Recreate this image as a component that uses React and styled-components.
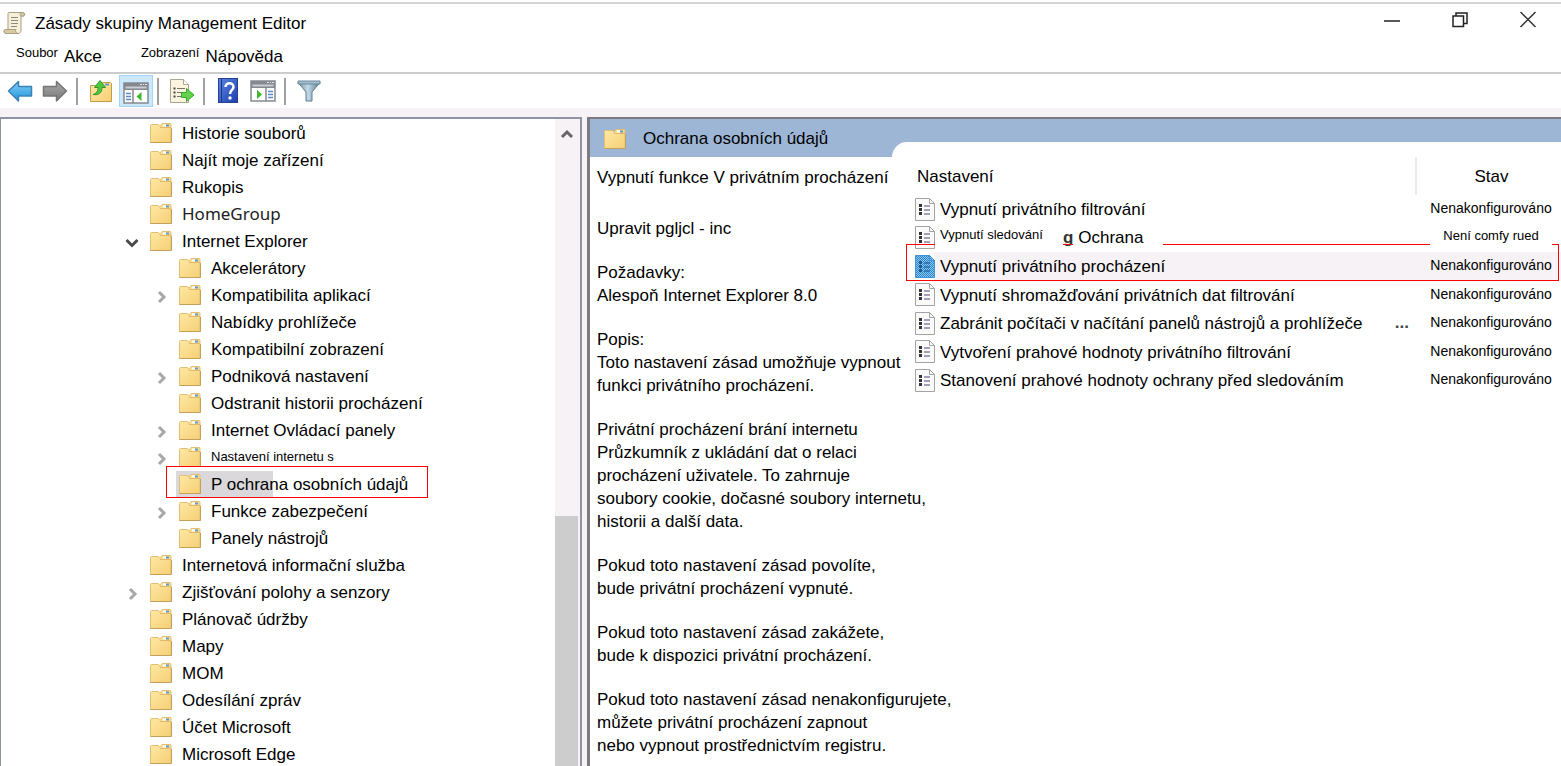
import React from "react";
import styled, { createGlobalStyle, css } from "styled-components";

const tree = [
    { label: "Historie souborů" },
    { label: "Najít moje zařízení" },
    { label: "Rukopis" },
    { label: "HomeGroup", alt: true },
    { label: "Internet Explorer", arrow: "down" },
    { label: "Akcelerátory", nested: true },
    { label: "Kompatibilita aplikací", nested: true, arrow: "right" },
    { label: "Nabídky prohlížeče", nested: true },
    { label: "Kompatibilní zobrazení", nested: true },
    { label: "Podniková nastavení", nested: true, arrow: "right" },
    { label: "Odstranit historii procházení", nested: true },
    { label: "Internet Ovládací panely", nested: true, arrow: "right" },
    { label: "Nastavení internetu s", nested: true, arrow: "right", small: true },
    { label: "P ochrana osobních údajů", nested: true, selected: true },
    { label: "Funkce zabezpečení", nested: true, arrow: "right" },
    { label: "Panely nástrojů", nested: true },
    { label: "Internetová informační služba" },
    { label: "Zjišťování polohy a senzory", arrow: "right" },
    { label: "Plánovač údržby" },
    { label: "Mapy" },
    { label: "MOM" },
    { label: "Odesílání zpráv" },
    { label: "Účet Microsoft" },
    { label: "Microsoft Edge" },
];

const details = [
    ["Požadavky:", "Alespoň Internet Explorer 8.0"],
    ["Popis:", "Toto nastavení zásad umožňuje vypnout", "funkci privátního procházení."],
    [
        "Privátní procházení brání internetu",
        "Průzkumník z ukládání dat o relaci",
        "procházení uživatele. To zahrnuje",
        "soubory cookie, dočasné soubory internetu,",
        "historii a další data.",
    ],
    ["Pokud toto nastavení zásad povolíte,", "bude privátní procházení vypnuté."],
    ["Pokud toto nastavení zásad zakážete,", "bude k dispozici privátní procházení."],
    [
        "Pokud toto nastavení zásad nenakonfigurujete,",
        "můžete privátní procházení zapnout",
        "nebo vypnout prostřednictvím registru.",
    ],
];

const settings = [
    { name: "Vypnutí privátního filtrování", state: "Nenakonfigurováno" },
    { name: "Vypnutí sledování", rest: "Ochrana", state: "Není comfy rued" },
    { name: "Vypnutí privátního procházení", state: "Nenakonfigurováno", selected: true },
    { name: "Vypnutí shromažďování privátních dat filtrování", state: "Nenakonfigurováno" },
    {
        name: "Zabránit počítači v načítání panelů nástrojů a prohlížeče",
        state: "Nenakonfigurováno",
        more: true,
    },
    { name: "Vytvoření prahové hodnoty privátního filtrování", state: "Nenakonfigurováno" },
    { name: "Stanovení prahové hodnoty ochrany před sledováním", state: "Nenakonfigurováno" },
];

const App = () => {
    return (
        <Window>
            <GlobalStyle />
            <Gradients />
            <TitleBar>
                <ScrollIcon />
                <Title>Zásady skupiny Management Editor</Title>
                <ControlButton aria-label="Minimalizovat">
                    <svg width="18" height="18" viewBox="0 0 18 18">
                        <path d="M1 10h16" stroke="#222" strokeWidth="1.500" />
                    </svg>
                </ControlButton>
                <ControlButton aria-label="Obnovit">
                    <svg width="18" height="18" viewBox="0 0 18 18" fill="none" stroke="#222" strokeWidth="1.500">
                        <path d="M2 5h10.500v10.500H2zM5 4.500V2h11v10.500h-3" />
                    </svg>
                </ControlButton>
                <ControlButton aria-label="Zavřít">
                    <svg width="18" height="18" viewBox="0 0 18 18">
                        <path d="M1.500 1l15 15M16.500 1l-15 15" stroke="#333" strokeWidth="1.500" />
                    </svg>
                </ControlButton>
            </TitleBar>
            <MenuBar>
                <MenuButton $small>Soubor</MenuButton>
                <MenuButton $wide>Akce</MenuButton>
                <MenuButton $small>Zobrazení</MenuButton>
                <MenuButton>Nápověda</MenuButton>
            </MenuBar>
            <Toolbar>
                <ToolButton aria-label="Zpět">
                    <ArrowIcon fill="url(#blueArrow)" stroke="#3b82b5" />
                </ToolButton>
                <ToolButton aria-label="Vpřed">
                    <ArrowIcon fill="url(#grayArrow)" stroke="#757575" flip />
                </ToolButton>
                <Separator />
                <ToolButton aria-label="O úroveň výš">
                    <FolderUpIcon />
                </ToolButton>
                <ToolButton aria-label="Strom konzoly" $active>
                    <PaneIcon />
                </ToolButton>
                <Separator />
                <ToolButton aria-label="Exportovat seznam">
                    <ExportIcon />
                </ToolButton>
                <Separator />
                <ToolButton aria-label="Nápověda">
                    <HelpIcon />
                </ToolButton>
                <ToolButton aria-label="Podokno akcí">
                    <PaneIcon right />
                </ToolButton>
                <Separator />
                <ToolButton aria-label="Filtr">
                    <FunnelIcon />
                </ToolButton>
            </Toolbar>
            <Panes>
                <TreePane>
                    <Tree>
                        {tree.map((item) => (
                            <TreeItem key={item.label} $nested={item.nested}>
                                <Toggle>{item.arrow && <Chevron direction={item.arrow} />}</Toggle>
                                {item.selected && <Highlight />}
                                <FolderIcon />
                                <TreeLabel $small={item.small} $alt={item.alt}>
                                    {item.label}
                                </TreeLabel>
                                {item.selected && <TreeMark />}
                            </TreeItem>
                        ))}
                    </Tree>
                    <ScrollTrack>
                        <ScrollUp aria-label="Posunout nahoru">
                            <svg width="14" height="10" viewBox="0 0 14 10" fill="none">
                                <path d="M2 8l5-5 5 5" stroke="#666" strokeWidth="3" />
                            </svg>
                        </ScrollUp>
                        <ScrollSpace />
                        <ScrollThumb />
                    </ScrollTrack>
                </TreePane>
                <DetailPane>
                    <Description>
                        <DetailHeader>
                            <FolderIcon />
                            Ochrana osobních údajů
                        </DetailHeader>
                        <DescriptionBody>
                            <Heading>Vypnutí funkce V privátním procházení</Heading>
                            <Paragraph>Upravit pgljcl - inc</Paragraph>
                            {details.map((lines) => (
                                <Paragraph key={lines[0]}>
                                    {lines.map((line) => (
                                        <Line key={line}>{line}</Line>
                                    ))}
                                </Paragraph>
                            ))}
                        </DescriptionBody>
                    </Description>
                    <ListArea>
                        <Table>
                            <thead>
                                <tr>
                                    <HeadCell>Nastavení</HeadCell>
                                    <HeadCell $state>Stav</HeadCell>
                                </tr>
                            </thead>
                            <tbody>
                                {settings.map((item) => (
                                    <Row key={item.name} $selected={item.selected}>
                                        <NameCell>
                                            {item.selected && <RowMark />}
                                            <NameContent>
                                                <SettingIcon selected={item.selected} />
                                                {item.rest ? (
                                                    <>
                                                        <Patch $small>{item.name}</Patch>
                                                        <Letter>g</Letter>
                                                        <Patch>{item.rest}</Patch>
                                                    </>
                                                ) : (
                                                    <SettingName>{item.name}</SettingName>
                                                )}
                                                {item.more && <More>...</More>}
                                            </NameContent>
                                        </NameCell>
                                        <StateCell>
                                            <State $patch={Boolean(item.rest)}>{item.state}</State>
                                        </StateCell>
                                    </Row>
                                ))}
                            </tbody>
                        </Table>
                    </ListArea>
                </DetailPane>
            </Panes>
        </Window>
    );
};

export default App;

const Gradients = () => (
    <svg width="0" height="0" aria-hidden="true" display="block">
        <defs>
            <linearGradient id="folder" x1="0" y1="0" x2="1" y2="1">
                <stop offset="0" stopColor="#ffe9a6" />
                <stop offset="1" stopColor="#f5cf74" />
            </linearGradient>
            <linearGradient id="blueArrow" x1="0" y1="0" x2="0" y2="1">
                <stop offset="0" stopColor="#7fd0f8" />
                <stop offset="1" stopColor="#1f93dc" />
            </linearGradient>
            <linearGradient id="grayArrow" x1="0" y1="0" x2="0" y2="1">
                <stop offset="0" stopColor="#aaa" />
                <stop offset="1" stopColor="#777" />
            </linearGradient>
            <linearGradient id="help" x1="0" y1="0" x2="1" y2="1">
                <stop offset="0" stopColor="#5d86e0" />
                <stop offset="1" stopColor="#1c3fae" />
            </linearGradient>
            <linearGradient id="funnel" x1="0" y1="0" x2="1" y2="0">
                <stop offset="0" stopColor="#6d8ea5" />
                <stop offset="0.45" stopColor="#c4dbe8" />
                <stop offset="1" stopColor="#55758c" />
            </linearGradient>
            <pattern id="dither" width="2" height="2" patternUnits="userSpaceOnUse">
                <rect width="2" height="2" fill="#8cc4ec" />
                <rect width="1" height="1" fill="#2a86cf" />
                <rect x="1" y="1" width="1" height="1" fill="#2a86cf" />
            </pattern>
        </defs>
    </svg>
);

const FolderIcon = () => (
    <Icon width="22" height="20" viewBox="0 0 22 20">
        <path d="M.5 2.500q0-1 1-1h7l1.500 2 2-3h8q1 0 1 1V19.500H.5z" fill="url(#folder)" stroke="#e3bf74" />
        <path d="M10 4.500h11" stroke="#e0b868" fill="none" />
        <path d="M13 2.500h3" stroke="#fff" strokeWidth="2" />
        <path d="M16 2.500h3" stroke="#5b9bd5" strokeWidth="2" />
        <path d="M.5 19.500h21V5" stroke="#c4a05c" fill="none" />
    </Icon>
);

const ScrollIcon = () => (
    <Icon width="23" height="24" viewBox="0 0 23 24">
        <path
            d="M6 1.500h14c2 0 2.500 3 .5 3.500H18v14c0 2-1 3.500-3 3.500H3c-2.500 0-3-4 0-4h2V4c0-1.500 0-2.500 1-2.500z"
            fill="#f6efd9"
            stroke="#a99f83"
        />
        <path
            d="M18 5c-1.500-.5-1.500-3 1-3.500 3 0 3 3.500 1 3.500zM3 18.500h10c-1 1.500 0 4 2 4H3c-2.500 0-2.500-4 0-4z"
            fill="#d9cba0"
            stroke="#a99f83"
        />
        <path d="M8 6.500h7M8 9.500h7M8 12.500h7M8 15.500h6" stroke="#8e8a80" />
    </Icon>
);

const ArrowIcon = ({ fill, stroke, flip }) => (
    <Icon width="26" height="22" viewBox="0 0 26 22">
        <path
            d={
                flip
                    ? "M24.500 11L14.500 1.500V6.500H1.500v9.500h13v5z"
                    : "M1.500 11L11.500 1.500V6.500h13v9.500h-13v5z"
            }
            fill={fill}
            stroke={stroke}
            strokeWidth="1.500"
            strokeLinejoin="round"
        />
    </Icon>
);

const FolderUpIcon = () => (
    <Icon width="24" height="24" viewBox="0 0 24 24">
        <path d="M1.500 6.500h10l2-3h8l1 1v18h-21z" fill="url(#folder)" stroke="#c39b4c" />
        <path d="M16 5.500h4" stroke="#5b9bd5" strokeWidth="2" />
        <path d="M4 15.500c4-1 5-4 5-7H5.500L11 1.500l5.500 7H13c0 5-3 8-9 7z" fill="#4fc83d" stroke="#2d972b" />
    </Icon>
);

const PaneIcon = ({ right }) => (
    <Icon width="26" height="22" viewBox="0 0 26 22">
        <rect x="1" y="1" width="24" height="20" fill="#fff" stroke="#85898f" strokeWidth="1.500" />
        <path d="M1 1h24v7H1z" fill="#85898f" />
        <path d="M2.500 5.500h21" stroke="#c9ccd0" strokeWidth="2" />
        <path d="M17 2.500h2M20 2.500h1M22 2.500h2" stroke="#e8eaee" />
        {right ? (
            <>
                <path d="M16 8v13" stroke="#85898f" strokeWidth="1.500" />
                <path d="M7 10v9l5-4.500z" fill="#3db82d" />
                <path d="M18 11.500h5M18 14.500h5M18 17.500h5" stroke="#5a8bc6" strokeWidth="1.500" />
            </>
        ) : (
            <>
                <path d="M10 8v13" stroke="#85898f" strokeWidth="1.500" />
                <path d="M18.500 10v9l-5-4.500z" fill="#3db82d" />
                <path d="M3 11.500h5M3 14.500h5M3 17.500h5" stroke="#5a8bc6" strokeWidth="1.500" />
            </>
        )}
    </Icon>
);

const ExportIcon = () => (
    <Icon width="26" height="26" viewBox="0 0 26 26">
        <path d="M1.500 1.500h13l5 5v18h-18z" fill="#fbf5df" stroke="#aaa58f" />
        <path d="M14.500 1.500v5h5" fill="#fff" stroke="#aaa58f" />
        <path d="M4.500 10.500h2M4.500 14.500h2M4.500 18.500h2" stroke="#444" strokeWidth="2" />
        <path d="M8 10.500h8M8 14.500h5M8 18.500h5" stroke="#77726a" />
        <path d="M12.500 14.500h5v-4l7.500 6.500-7.500 6.500v-4h-5z" fill="#5fd44a" stroke="#3aa833" />
    </Icon>
);

const HelpIcon = () => (
    <Icon width="20" height="26" viewBox="0 0 20 26">
        <rect x=".5" y=".5" width="19" height="24" fill="url(#help)" stroke="#26408f" />
        <path d="M3.500 1v23" stroke="#1c3690" />
        <path d="M7.500 9c0-5 8-5 8 0 0 3-3.500 3-3.500 7" fill="none" stroke="#fff" strokeWidth="2.500" />
        <circle cx="12" cy="20" r="1.700" fill="#fff" />
    </Icon>
);

const FunnelIcon = () => (
    <Icon width="24" height="22" viewBox="0 0 24 22">
        <path d="M1 2.500l8 9.500v9h6v-9l8-9.500z" fill="url(#funnel)" stroke="#5f7d92" />
        <path d="M1 1h22v3H1z" fill="#a3bccc" stroke="#6b899d" />
    </Icon>
);

const SettingIcon = ({ selected }) => (
    <Icon width="20" height="23" viewBox="0 0 20 23">
        <path
            d="M.5.5h14l5 5v17H.5z"
            fill={selected ? "url(#dither)" : "#fafafa"}
            stroke={selected ? "#3f93d4" : "#a3a3a3"}
        />
        <path d="M14.500.5v5h5" fill="none" stroke={selected ? "#3f93d4" : "#a3a3a3"} />
        <path d="M4 7.500h3M4 11.500h3M4 15.500h3" stroke={selected ? "#1c5c96" : "#333"} strokeWidth="3" />
        <path d="M9 8h6M9 12h6M9 16h6" stroke={selected ? "#2a6da8" : "#8581a0"} strokeWidth="1.500" />
    </Icon>
);

const Chevron = ({ direction }) => (
    <Icon width="14" height="14" viewBox="0 0 14 14" fill="none">
        {direction === "down" ? (
            <path d="M1.500 4l5.500 5.500L12.500 4" stroke="#4a4a4a" strokeWidth="3" />
        ) : (
            <path d="M5 2l5 5-5 5" stroke="#a8a8a8" strokeWidth="3" />
        )}
    </Icon>
);

const GlobalStyle = createGlobalStyle`
    * {
        box-sizing: border-box;
    }

    body {
        margin: 0;
        font-family: "Liberation Sans", Arial, sans-serif;
        font-size: 17px;
        color: #000;
        overflow: hidden;
    }

    button {
        font: inherit;
        color: inherit;
        border: 0;
        padding: 0;
        background: none;
    }
`;

const Icon = styled.svg`
    display: block;
    flex: none;
`;

const Window = styled.div`
    display: flex;
    flex-direction: column;
    height: 100vh;
    padding-top: 2px;
    background: #fff;
    white-space: nowrap;
`;

const TitleBar = styled.header`
    display: flex;
    align-items: center;
    height: 39px;
    padding-left: 3px;
    border-top: 2px solid #d4d4d4;
`;

const Title = styled.h1`
    flex: 1;
    margin: 0;
    padding: 2px 0 0 9px;
    font-size: 17px;
    font-weight: 400;
`;

const ControlButton = styled.button`
    display: flex;
    align-items: center;
    justify-content: center;
    width: 66px;
    height: 30px;
    margin-left: 2px;
    padding-bottom: 6px;
`;

const MenuBar = styled.nav`
    display: flex;
    height: 31px;
    padding-left: 16px;
    gap: 6px;
`;

const MenuButton = styled.button`
    height: 31px;
    text-align: left;
    ${({ $small }) =>
        $small &&
        css`
            height: 23px;
            font-size: 13px;
        `}
    ${({ $wide }) =>
        $wide &&
        css`
            width: 71px;
        `}
`;

const Toolbar = styled.div`
    display: flex;
    align-items: center;
    gap: 1px;
    height: 36px;
    padding-left: 3px;
    border-top: 2px solid #ccc;
`;

const ToolButton = styled.button`
    display: flex;
    align-items: center;
    justify-content: center;
    width: 34px;
    height: 32px;
    ${({ $active }) =>
        $active &&
        css`
            padding-top: 3px;
            background: #cce8ff;
            border: 1px solid #a6d4f7;
        `}
`;

const Separator = styled.div`
    width: 2px;
    height: 27px;
    margin: 0 5px 0 3px;
    background: #a0a0a0;
`;

const Panes = styled.main`
    display: flex;
    flex: 1;
    min-height: 0;
    gap: 5px;
    padding-top: 9px;
    background: #f6f2f6;
`;

const TreePane = styled.section`
    display: flex;
    flex: 0 0 582px;
    min-height: 0;
    border: solid #8f94a3;
    border-width: 2px 2px 0 1px;
    background: #fff;
    overflow: hidden;
`;

const Tree = styled.ul`
    flex: 1;
    margin: 0;
    padding: 0;
    list-style: none;
`;

const TreeItem = styled.li`
    position: relative;
    display: flex;
    align-items: center;
    height: 27px;
    padding-left: ${({ $nested }) => ($nested ? "153px" : "124px")};
`;

const Toggle = styled.span`
    flex: 0 0 25px;
    padding-top: 4px;
`;

const TreeLabel = styled.span`
    position: relative;
    padding: 3px 0 0 10px;
    ${({ $small }) =>
        $small &&
        css`
            padding-bottom: 4px;
            font-size: 13px;
        `}
    ${({ $alt }) =>
        $alt &&
        css`
            padding-top: 0;
            font-family: "Noto Sans", sans-serif;
            color: #222;
        `}
`;

const Highlight = styled.span`
    position: absolute;
    top: 1px;
    left: 175px;
    width: 97px;
    height: 27px;
    background: #dad8da;

    & + svg {
        position: relative;
    }
`;

const TreeMark = styled.span`
    position: absolute;
    top: -4px;
    left: 165px;
    width: 262px;
    height: 32px;
    border: 1px solid #f00;
`;

const ScrollTrack = styled.div`
    display: flex;
    flex-direction: column;
    flex: 0 0 25px;
    padding-right: 2px;
    background: #f6f2f6;
`;

const ScrollUp = styled.button`
    display: flex;
    align-items: center;
    justify-content: center;
    height: 29px;
`;

const ScrollSpace = styled.div`
    flex: 368;
`;

const ScrollThumb = styled.div`
    flex: 250;
    background: #cdcdcd;
`;

const DetailPane = styled.section`
    display: flex;
    flex: 1;
    min-width: 0;
    border: solid #7b7b80;
    border-width: 2px 0 0 3px;
    background: #9db6d6;
`;

const Description = styled.div`
    position: relative;
    z-index: 1;
    display: flex;
    flex-direction: column;
    flex: 0 0 302px;
    min-width: 0;
`;

const DetailHeader = styled.h2`
    display: flex;
    align-items: center;
    gap: 17px;
    height: 38px;
    margin: 0;
    padding: 2px 0 0 14px;
    font-size: 17px;
    font-weight: 400;
`;

const DescriptionBody = styled.div`
    flex: 1;
    min-height: 0;
    padding: 9px 0 0 7px;
    background: #fff;
    line-height: 23px;
`;

const Heading = styled.h3`
    margin: 0 0 28px;
    font-size: 17px;
    font-weight: 400;
`;

const Paragraph = styled.p`
    margin: 0 0 21px;
`;

const Line = styled.span`
    display: block;
`;

const ListArea = styled.div`
    flex: 1;
    min-width: 0;
    margin-top: 23px;
    padding-top: 15px;
    border-top-left-radius: 15px;
    background: #fff;
`;

const Table = styled.table`
    width: 100%;
    table-layout: fixed;
    border-collapse: collapse;
`;

const HeadCell = styled.th`
    height: 38px;
    padding: 2px 0 0 25px;
    text-align: left;
    font-weight: 400;
    ${({ $state }) =>
        $state &&
        css`
            width: 145px;
            padding-left: 5px;
            text-align: center;
            border-left: 2px solid #ebebeb;
        `}
`;

const Row = styled.tr`
    position: relative;
    height: 28px;

    &:nth-child(even) {
        height: 29px;
    }

    ${({ $selected }) =>
        $selected &&
        css`
            background: linear-gradient(90deg, #fff 42px, #f6f2f6 42px);
        `}
`;

const NameCell = styled.td`
    padding: 0 7px 0 23px;
`;

const NameContent = styled.div`
    display: flex;
    align-items: center;
`;

const SettingName = styled.span`
    flex: 1;
    padding: 2px 0 0 5px;
`;

const Patch = styled.span`
    position: relative;
    z-index: 1;
    padding: 2px 20px 2px 5px;
    background: #fff;
    ${({ $small }) =>
        $small &&
        css`
            padding: 0 20px 6px 5px;
            font-size: 13px;
        `}
`;

const Letter = styled.b`
    color: #333;
`;

const More = styled.span`
    font-weight: 700;
    color: #444;
`;

const StateCell = styled.td`
    padding: 0 0 2px 5px;
    text-align: center;
`;

const State = styled.span`
    font-size: 14px;
    ${({ $patch }) =>
        $patch &&
        css`
            position: relative;
            z-index: 1;
            display: inline-block;
            padding: 0 13px 6px;
            background: #fff;
            font-size: 13px;
        `}
`;

const RowMark = styled.span`
    position: absolute;
    top: -8px;
    left: 14px;
    right: 2px;
    height: 37px;
    border: 1px solid #f00;
`;
